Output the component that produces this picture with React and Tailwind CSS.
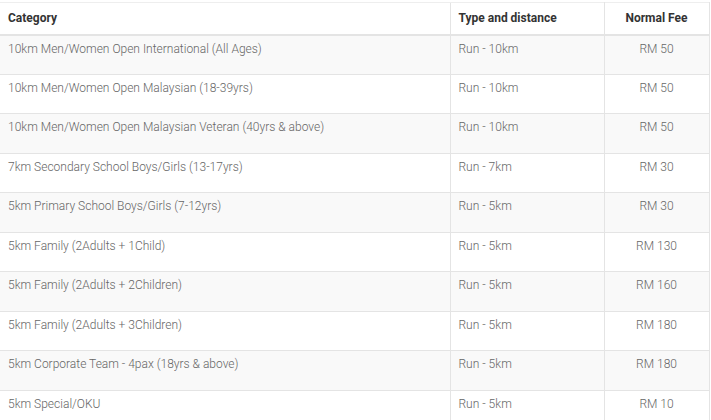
const rows = [
  ['10km Men/Women Open International (All Ages)', 'Run - 10km', 'RM 50'],
  ['10km Men/Women Open Malaysian (18-39yrs)', 'Run - 10km', 'RM 50'],
  ['10km Men/Women Open Malaysian Veteran (40yrs & above)', 'Run - 10km', 'RM 50'],
  ['7km Secondary School Boys/Girls (13-17yrs)', 'Run - 7km', 'RM 30'],
  ['5km Primary School Boys/Girls (7-12yrs)', 'Run - 5km', 'RM 30'],
  ['5km Family (2Adults + 1Child)', 'Run - 5km', 'RM 130'],
  ['5km Family (2Adults + 2Children)', 'Run - 5km', 'RM 160'],
  ['5km Family (2Adults + 3Children)', 'Run - 5km', 'RM 180'],
  ['5km Corporate Team - 4pax (18yrs & above)', 'Run - 5km', 'RM 180'],
  ['5km Special/OKU', 'Run - 5km', 'RM 10'],
];

export default function App() {
  return (
    <div className="w-[711px] h-[420px] overflow-hidden bg-white pt-[2px] font-['Roboto',sans-serif]">
      <table className="w-[709px] border-collapse table-fixed text-[12px] text-[#666]">
        <colgroup>
          <col className="w-[450px]" />
          <col className="w-[154px]" />
          <col className="w-[105px]" />
        </colgroup>
        <thead>
          <tr className="h-[32px]">
            <th className="border-t border-[#eee] border-b-2 border-b-[#e4e4e4] px-2 text-left font-bold text-[#333]">Category</th>
            <th className="border border-[#e4e4e4] border-t-[#eee] border-b-2 px-2 text-left font-bold text-[#333]">Type and distance</th>
            <th className="border border-[#e4e4e4] border-t-[#eee] border-b-2 px-2 text-center font-bold text-[#333]">Normal Fee</th>
          </tr>
        </thead>
        <tbody className="font-light">
          {rows.map((r, i) => (
            <tr key={i} className={i % 2 === 0 ? 'h-[39.5px] bg-[#f9f9f9]' : 'h-[39.5px] bg-white'}>
              <td className="border-b border-[#e4e4e4] px-2 pt-[4px] align-top">{r[0]}</td>
              <td className="border-x border-b border-[#e4e4e4] px-2 pt-[4px] align-top">{r[1]}</td>
              <td className="border-x border-b border-[#e4e4e4] px-2 pt-[4px] align-top text-center">{r[2]}</td>
            </tr>
          ))}
        </tbody>
      </table>
    </div>
  );
}
